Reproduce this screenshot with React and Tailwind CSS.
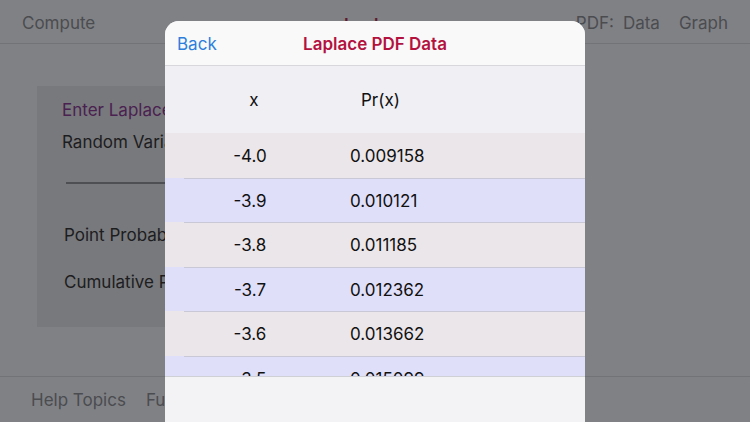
import React from 'react';

const rows = [
  ['-4.0', '0.009158'],
  ['-3.9', '0.010121'],
  ['-3.8', '0.011185'],
  ['-3.7', '0.012362'],
  ['-3.6', '0.013662'],
  ['-3.5', '0.015099'],
  ['-3.4', '0.016687'],
];

const App = () => {
  return (
    <div
      className="relative w-[750px] h-[422px] overflow-hidden bg-[#808185]"
      style={{ fontFamily: 'Inter, "Noto Sans", sans-serif' }}
    >
      {/* dimmed screen behind the sheet */}
      <div className="flex flex-col h-full">
        <div className="relative h-[44px] pt-[4px] flex items-center border-b border-[#727377] text-[17px] text-[#4b4c50]">
          <span className="ml-[22px]">Compute</span>
          <span className="absolute left-[344px] top-[13px] font-semibold text-[#5e1a2c]">Laplace</span>
          <div className="ml-auto mr-[22px] flex items-center">
            <span>PDF:</span>
            <span className="ml-[9px]">Data</span>
            <span className="ml-[19px]">Graph</span>
          </div>
        </div>

        <div className="flex-1 pt-[42px] pl-[37px]">
          <div className="w-[500px] h-[241px] bg-[#78797d] flex flex-col text-[17px] text-[#1d1d20]">
            <span className="ml-[25px] mt-[12px] text-[#4a2150]">Enter Laplace Parameters</span>
            <span className="ml-[25px] mt-[6px]">Random Variable</span>
            <div className="ml-[29px] mt-[27px] h-[2px] w-[300px] bg-[#4e4f53]" />
            <span className="ml-[27px] mt-[39px]">Point Probability</span>
            <span className="ml-[27px] mt-[21px]">Cumulative Probability</span>
          </div>
        </div>

        <div className="h-[46px] pt-[2px] border-t border-[#727377] flex items-center text-[17px] text-[#4b4c50]">
          <span className="ml-[31px]">Help Topics</span>
          <span className="ml-[20px]">Functions</span>
        </div>
      </div>

      {/* data sheet */}
      <div className="absolute left-[165px] top-[21px] w-[420px] h-[401px] rounded-t-[14px] overflow-hidden bg-[#efeff4] flex flex-col">
        <div className="relative h-[45px] pt-[3px] shrink-0 bg-[#f9f9f9] border-b border-[#d8d8dc] flex items-center justify-center">
          <button className="absolute left-[12px] text-[17px] text-[#2d7fdc]">Back</button>
          <span className="text-[17px] font-semibold text-[#b3123f]">Laplace PDF Data</span>
        </div>

        <div className="h-[67px] pt-[2px] shrink-0 flex items-center text-[17px] text-[#111]">
          <span className="w-[178px] text-center">x</span>
          <span className="ml-[18px]">Pr(x)</span>
        </div>

        <div className="flex flex-col">
          {rows.map(([x, p], i) => (
            <div
              key={x}
              className={`relative h-[44.6px] pt-[3px] shrink-0 flex items-center text-[17px] text-[#111] ${
                i % 2 === 0 ? 'bg-[#ebe6e9]' : 'bg-[#e0dffa]'
              }`}
            >
              {i > 0 && <div className="absolute top-0 left-[19px] right-0 h-px bg-[#c9c8d6]" />}
              <span className="w-[170px] text-center">{x}</span>
              <span className="ml-[15px]">{p}</span>
            </div>
          ))}
        </div>

        <div className="absolute left-0 right-0 bottom-0 h-[46px] bg-[#f3f3f6] border-t border-[#cfcfd6]" />
      </div>
    </div>
  );
};

export default App;
